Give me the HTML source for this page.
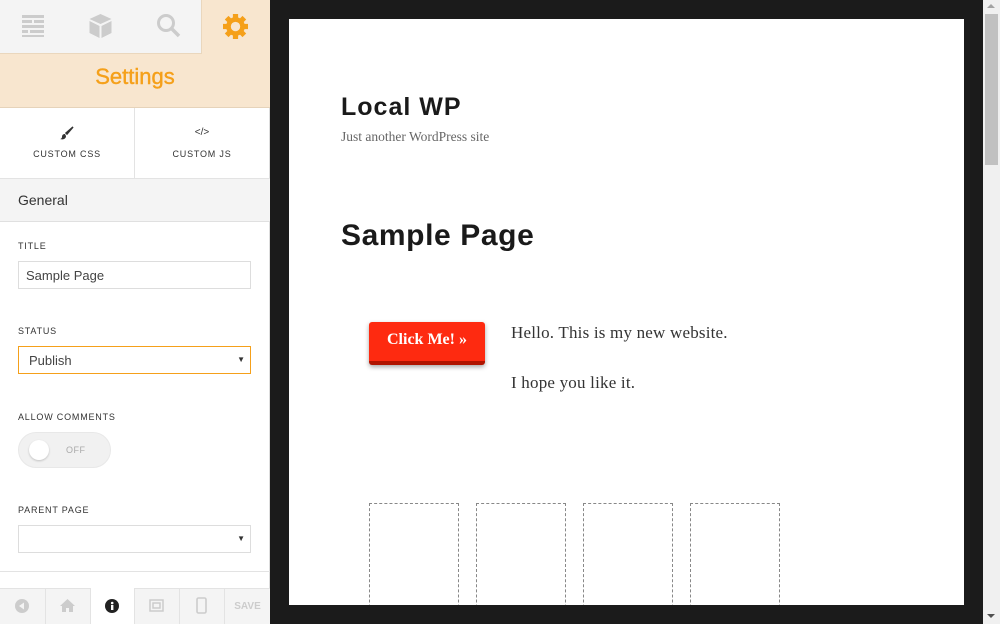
<!DOCTYPE html>
<html><head><style>
*{box-sizing:border-box;margin:0;padding:0}
body{width:1000px;height:624px;overflow:hidden;background:#1b1b1b;font-family:"Liberation Sans",sans-serif;position:relative}
.sb{position:absolute;left:0;top:0;width:270px;height:624px;background:#fff;border-right:1px solid #ddd}
.abs{position:absolute}
.lbl{position:absolute;left:18px;font-size:9px;letter-spacing:.8px;color:#333}
.inp{position:absolute;left:18px;width:233px;height:28px;border:1px solid #ddd;font-size:13px;color:#444;padding:6px 7px}
.serif{font-family:"Liberation Serif",serif}
</style></head><body>
<div class="sb">
 <div class="abs" style="left:0;top:0;width:270px;height:108px;background:#f8e6cf"></div>
 <div class="abs" style="left:0;top:0;width:202px;height:54px;background:#f4f4f4;border-bottom:1px solid #ead7bd;border-right:1px solid #ead7bd"></div>
 <svg class="abs" style="left:22px;top:14px" width="24" height="24" viewBox="0 0 24 24" fill="#ccc"><rect x="0" y="1" width="22" height="3"/><rect x="0" y="6" width="10" height="3"/><rect x="12" y="6" width="10" height="3"/><rect x="0" y="11" width="22" height="3"/><rect x="0" y="16" width="6" height="3"/><rect x="8" y="16" width="14" height="3"/><rect x="0" y="21" width="22" height="2"/></svg>
 <svg class="abs" style="left:88px;top:13px" width="25" height="26" viewBox="0 0 24 26" fill="#ccc"><path d="M12 1L23 6 12 11 1 6z"/><path d="M1 8l10 5v12L1 20z"/><path d="M23 8l-10 5v12l10-5z"/></svg>
 <svg class="abs" style="left:156px;top:13px" width="26" height="26" viewBox="0 0 26 26"><circle cx="10" cy="10" r="7.5" fill="none" stroke="#ccc" stroke-width="3"/><path d="M15 15l8 8" stroke="#ccc" stroke-width="3.5"/></svg>
 <svg class="abs" style="left:223px;top:14px" width="25" height="25" viewBox="0 0 24 24"><g fill="#f5a01a"><circle cx="12" cy="12" r="9"/><g id="t"><rect x="9.5" y="0" width="5" height="24"/><rect x="0" y="9.5" width="24" height="5"/></g><use href="#t" transform="rotate(45 12 12)"/></g><circle cx="12" cy="12" r="4.5" fill="#f8e6cf"/></svg>
 <div class="abs" style="left:0;top:64px;width:270px;text-align:center;font-size:22px;color:#f5a01a;-webkit-text-stroke:.4px #f5a01a">Settings</div>
 <div class="abs" style="left:0;top:107px;width:270px;height:1px;background:#e6d3ba"></div>
 <div class="abs" style="left:134px;top:108px;width:1px;height:70px;background:#e3e3e3"></div>
 <svg class="abs" style="left:60px;top:126px" width="14" height="14" viewBox="0 0 14 14"><path d="M13 1L7 8l-1-1z" fill="#333" stroke="#333" stroke-width="1.5"/><path d="M5 8c-2 0-3 1-3 3 0 1-1 2-2 2 3 1 6 0 6-3z" fill="#333"/></svg>
 <div class="abs" style="left:0;top:149px;width:134px;text-align:center;font-size:9px;letter-spacing:.8px;color:#333">CUSTOM CSS</div>
 <div class="abs" style="left:135px;top:127px;width:134px;text-align:center;font-size:10px;color:#333">&lt;/&gt;</div>
 <div class="abs" style="left:135px;top:149px;width:134px;text-align:center;font-size:9px;letter-spacing:.8px;color:#333">CUSTOM JS</div>
 <div class="abs" style="left:0;top:178px;width:270px;height:44px;background:#f4f4f4;border-top:1px solid #e3e3e3;border-bottom:1px solid #e0e0e0"></div>
 <div class="abs" style="left:18px;top:192px;font-size:14px;color:#333">General</div>
 <div class="lbl" style="top:241px">TITLE</div>
 <div class="inp" style="top:261px">Sample Page</div>
 <div class="lbl" style="top:326px">STATUS</div>
 <div class="inp" style="top:346px;border-color:#f5a01a;padding-left:10px">Publish<span style="position:absolute;right:5px;top:8px;font-size:8px;color:#333">▼</span></div>
 <div class="lbl" style="top:412px">ALLOW COMMENTS</div>
 <div class="abs" style="left:18px;top:432px;width:93px;height:36px;border-radius:18px;background:#f1f1f1;border:1px solid #e8e8e8"></div>
 <div class="abs" style="left:29px;top:440px;width:20px;height:20px;border-radius:10px;background:#fff;box-shadow:0 1px 2px rgba(0,0,0,.2)"></div>
 <div class="abs" style="left:66px;top:445px;font-size:9px;color:#aaa;letter-spacing:.5px">OFF</div>
 <div class="lbl" style="top:505px">PARENT PAGE</div>
 <div class="inp" style="top:525px"><span style="position:absolute;right:5px;top:8px;font-size:8px;color:#333">▼</span></div>
 <div class="abs" style="left:0;top:571px;width:270px;height:1px;background:#e3e3e3"></div>
 <div class="abs" style="left:0;top:588px;width:270px;height:36px;background:#f4f4f4;border-top:1px solid #e3e3e3"></div>
 <div class="abs" style="left:90px;top:588px;width:45px;height:36px;background:#fff;border-left:1px solid #e3e3e3;border-right:1px solid #e3e3e3"></div>
 <div class="abs" style="left:45px;top:589px;width:1px;height:35px;background:#e3e3e3"></div>
 <div class="abs" style="left:179px;top:589px;width:1px;height:35px;background:#e3e3e3"></div>
 <div class="abs" style="left:224px;top:589px;width:1px;height:35px;background:#e3e3e3"></div>
 <svg class="abs" style="left:15px;top:599px" width="14" height="14" viewBox="0 0 14 14"><circle cx="7" cy="7" r="7" fill="#ccc"/><path d="M9 3.5v7L4 7z" fill="#f4f4f4"/></svg>
 <svg class="abs" style="left:60px;top:599px" width="15" height="13" viewBox="0 0 15 13" fill="#ccc"><path d="M7.5 0L15 7h-2v6H9V9H6v4H2V7H0z"/></svg>
 <svg class="abs" style="left:105px;top:599px" width="14" height="14" viewBox="0 0 14 14"><circle cx="7" cy="7" r="7" fill="#222"/><rect x="6" y="6" width="2.4" height="5" fill="#fff"/><circle cx="7.2" cy="4" r="1.3" fill="#fff"/></svg>
 <svg class="abs" style="left:148px;top:598px" width="17" height="15" viewBox="0 0 17 15" fill="none" stroke="#ccc" stroke-width="1.5"><rect x="2" y="2" width="13" height="11"/><rect x="5" y="5" width="7" height="5"/></svg>
 <svg class="abs" style="left:196px;top:597px" width="11" height="17" viewBox="0 0 11 17"><rect x="1" y="1" width="9" height="15" rx="1.5" fill="none" stroke="#ccc" stroke-width="1.6"/></svg>
 <div class="abs" style="left:225px;top:601px;width:45px;text-align:center;font-size:10px;font-weight:bold;color:#ccc">SAVE</div>
</div>
<div class="abs" style="left:289px;top:19px;width:675px;height:586px;background:#fff;overflow:hidden">
 <div class="abs" style="left:52px;top:74px;font-size:25px;font-weight:bold;color:#1a1a1a;letter-spacing:1px">Local WP</div>
 <div class="abs serif" style="left:52px;top:110px;font-size:13.5px;color:#666">Just another WordPress site</div>
 <div class="abs" style="left:52px;top:200px;font-size:30px;font-weight:bold;color:#1a1a1a;letter-spacing:.6px">Sample Page</div>
 <div class="abs serif" style="left:80px;top:303px;width:116px;height:43px;background:#fe2a10;border-radius:3px;border-bottom:4px solid #b01400;box-shadow:0 2px 5px rgba(0,0,0,.35);color:#fff;font-weight:bold;font-size:16px;text-align:center;line-height:36px">Click Me! »</div>
 <div class="abs serif" style="left:222px;top:304px;font-size:17px;color:#333;letter-spacing:.2px">Hello. This is my new website.</div>
 <div class="abs serif" style="left:222px;top:354px;font-size:17px;color:#333;letter-spacing:.2px">I hope you like it.</div>
 <div class="abs" style="left:80px;top:484px;width:90px;height:130px;border:1px dashed #888"></div>
 <div class="abs" style="left:187px;top:484px;width:90px;height:130px;border:1px dashed #888"></div>
 <div class="abs" style="left:294px;top:484px;width:90px;height:130px;border:1px dashed #888"></div>
 <div class="abs" style="left:401px;top:484px;width:90px;height:130px;border:1px dashed #888"></div>
</div>
<div class="abs" style="left:983px;top:0;width:17px;height:624px;background:#f0f0f0"></div>
<div class="abs" style="left:985px;top:14px;width:13px;height:151px;background:#c1c1c1"></div>
<div class="abs" style="left:987px;top:4px;width:0;height:0;border-left:4px solid transparent;border-right:4px solid transparent;border-bottom:4px solid #a3a3a3"></div>
<div class="abs" style="left:987px;top:614px;width:0;height:0;border-left:4px solid transparent;border-right:4px solid transparent;border-top:4px solid #505050"></div>
</body></html>
